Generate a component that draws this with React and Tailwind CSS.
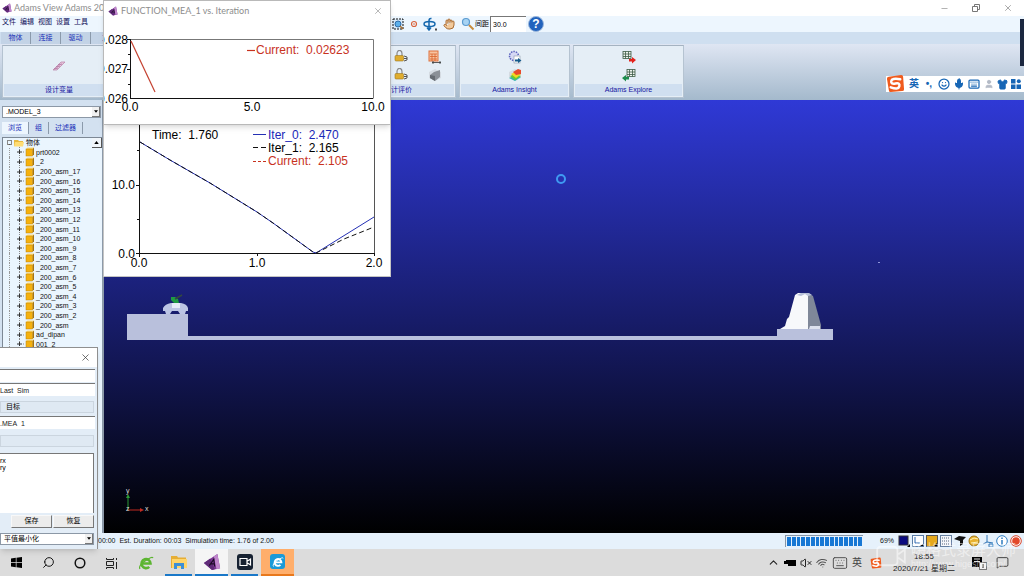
import clsx from 'clsx';
import {
  ChevronUp,
  Hand,
  Keyboard,
  MessageSquare,
  Mic,
  Minus,
  Search,
  Shirt,
  Smile,
  User,
  VolumeX,
  Wifi,
  X,
} from 'lucide-react';

const MENUS = ['文件', '编辑', '视图', '设置', '工具'];
const RIBBON_TABS = ['物体', '连接', '驱动', '力'];
const BROWSER_TABS = ['浏览', '组', '过滤器'];
const PARTS = [
  'prt0002',
  '_2',
  '_200_asm_17',
  '_200_asm_16',
  '_200_asm_15',
  '_200_asm_14',
  '_200_asm_13',
  '_200_asm_12',
  '_200_asm_11',
  '_200_asm_10',
  '_200_asm_9',
  '_200_asm_8',
  '_200_asm_7',
  '_200_asm_6',
  '_200_asm_5',
  '_200_asm_4',
  '_200_asm_3',
  '_200_asm_2',
  '_200_asm',
  'ad_dipan',
  '001_2',
];

function AdamsLogo({ className }) {
  return (
    <svg viewBox="0 0 20 20" className={className} aria-hidden="true">
      <path d="M1 11 16 1l3 16-9 2z" fill="#7b3794" />
      <path d="M16 1l3 16-4 1-3-14z" fill="#c086cc" />
      <path d="M1 11l9 8 3-1-5-12z" fill="#5f2a78" />
      <path d="M7 14l5-7 1 8M9 12h4" fill="none" stroke="#1d0b26" strokeWidth="1.300" />
    </svg>
  );
}

function SogouLogo({ className }) {
  return (
    <svg viewBox="0 0 20 20" className={className} aria-hidden="true">
      <path d="M3 3 16 1q2 0 2 2l1 13q0 2-2 2L5 19q-2 0-2-2L1 5q0-2 2-2z" fill="#f05a1c" />
      <path
        d="M15 5.500Q6 4 5.500 7.500T10 10t4 3-9 1"
        fill="none"
        stroke="#fff"
        strokeWidth="2.600"
        strokeLinecap="round"
      />
    </svg>
  );
}

function LockIcon() {
  return (
    <svg viewBox="0 0 14 12" className="h-3 w-3.5" aria-hidden="true">
      <path d="M3 6V3.500a2 2.500 0 0 1 5 0V6" fill="none" stroke="#8a8a8a" strokeWidth="1.200" />
      <rect x="1" y="5.500" width="8.500" height="5.500" rx="1" fill="#e0ad2e" stroke="#9c7720" strokeWidth=".6" />
      <path d="M10 6l3 1v3l-3 1M10 8.500h3" fill="none" stroke="#555" />
    </svg>
  );
}

function CalculatorIcon() {
  return (
    <svg viewBox="0 0 14 14" className="h-3.5 w-3.5" aria-hidden="true">
      <rect x="1" y="1" width="9" height="10" fill="#f7c3a0" stroke="#e0703a" />
      <path d="M2 4h7M2 6.500h7M2 9h7M4 4v7M7 4v7" stroke="#d9622b" strokeWidth=".8" />
      <path d="M4 12.500h9M5 11v3M12 11v3" stroke="#333" strokeWidth=".8" />
    </svg>
  );
}

function SurfaceIcon({ color }) {
  return (
    <svg viewBox="0 0 14 14" className="h-3.5 w-3.5" aria-hidden="true">
      <path d="M1 4l6-3 6 3v6l-6 3-6-3z" fill="#d5dbe2" />
      {color ? (
        <>
          <path d="M1 10l5-2 7 1-6 4z" fill="#2fb6b0" />
          <path d="M2 8l5-2 6 2-6 4z" fill="#6cc832" />
          <path d="M3 6l4-2 6 2-5 4z" fill="#f4d61f" />
          <path d="M5 4l5-3 3 1v4l-5 1z" fill="#e8492b" />
        </>
      ) : (
        <>
          <path d="M2 7l4-3 6-2v7l-5 4-5-3z" fill="#8b9097" />
          <path d="M2 7l5 1v5l-5-3z" fill="#666b72" />
        </>
      )}
    </svg>
  );
}

function InsightExportIcon() {
  return (
    <svg viewBox="0 0 14 14" className="h-3.5 w-3.5" aria-hidden="true">
      <circle cx="6" cy="6" r="4.500" fill="#d6d9f5" stroke="#5a61bd" strokeWidth="1.500" strokeDasharray="1.500 1" />
      <rect x="6" y="6" width="6" height="7" fill="#fff" stroke="#8a96a8" strokeWidth=".6" />
      <path d="M7 9.500h3V8l3.500 2.500L10 13v-1.500H7z" fill="#155a8a" />
    </svg>
  );
}

function SheetIcon({ incoming }) {
  return (
    <svg viewBox="0 0 14 14" className="h-3.5 w-3.5" aria-hidden="true">
      <g transform={incoming ? 'translate(4 0)' : undefined}>
        <rect x="1" y="1.500" width="8" height="7" fill="#eef4ee" stroke="#3c5b45" strokeWidth=".8" />
        <path d="M1 4h8M1 6.500h8M3.500 1.500v7M6.500 1.500v7" stroke="#3c5b45" strokeWidth=".8" />
      </g>
      {incoming ? (
        <path d="M7 9H4V7L0 10l4 3.500v-2h3z" fill="#1d8d4d" />
      ) : (
        <path d="M7 9h3V7l4 3-4 3.500v-2H7z" fill="#e3231c" />
      )}
    </svg>
  );
}

function RibbonGroup({ label, width, children }) {
  return (
    <section
      className={clsx(
        'flex shrink-0 flex-col border border-[#b5c3d1] border-t-[#a5b3c1] bg-[#e5eef6] p-px',
        width
      )}
    >
      <div className="flex flex-1 items-center justify-center">{children}</div>
      <h2 className="h-3 bg-[#d0dff0] text-center text-[7px] leading-3 text-[#1414a0]">{label}</h2>
    </section>
  );
}

function TitleBar() {
  return (
    <header className="flex h-4 shrink-0 items-center bg-white pl-0.5 text-[#8d8d8d]">
      <AdamsLogo className="h-2.5 w-2.5" />
      <h1 className="ml-0.5 flex-1 text-[9px] leading-4 font-[Lato,sans-serif]">
        Adams View Adams 2018
      </h1>
      <div className="flex text-[#777]">
        <button type="button" aria-label="Minimize" className="grid h-4 w-8 place-items-center">
          <Minus size={9} strokeWidth={1.5} />
        </button>
        <button type="button" aria-label="Restore" className="grid h-4 w-8 place-items-center">
          <svg viewBox="0 0 8 8" className="h-2 w-2" fill="none" stroke="currentColor" aria-hidden="true">
            <path d="M.5 2.500h5v5h-5zM2.500 2V.5h5v5H6" />
          </svg>
        </button>
        <button type="button" aria-label="Close" className="grid h-4 w-8 place-items-center">
          <X size={10} strokeWidth={1.5} />
        </button>
      </div>
    </header>
  );
}

function MenuBar() {
  return (
    <div className="flex h-4 shrink-0 items-center bg-[#edf6fe]">
      <nav className="flex h-4 w-[391px] shrink-0 items-start gap-1 pl-0.5 text-[7px] leading-3 text-[#10105a]">
        {MENUS.map((m) => (
          <button type="button" key={m}>
            {m}
          </button>
        ))}
      </nav>
      <div className="flex h-4 items-center gap-1">
        <button type="button" aria-label="Zoom box">
          <svg viewBox="0 0 14 14" className="h-3.5 w-3.5" aria-hidden="true">
            <rect x="2" y="2" width="10" height="10" fill="#d8eafa" stroke="#111" strokeDasharray="2 1" />
            <circle cx="7" cy="7" r="3" fill="#5cb0ea" stroke="#2d6ba8" />
            <path d="M9 9l3 3" stroke="#a87031" strokeWidth="1.500" />
          </svg>
        </button>
        <button type="button" aria-label="Center">
          <svg viewBox="0 0 10 10" className="h-2.5 w-2.5" fill="none" aria-hidden="true">
            <circle cx="5" cy="5" r="2.500" stroke="#d9633c" strokeWidth="1.200" />
            <circle cx="5" cy="5" r=".8" fill="#d9633c" />
          </svg>
        </button>
        <button type="button" aria-label="Rotate">
          <svg viewBox="0 0 14 14" className="h-3.5 w-3.5" fill="none" stroke="#1668ae" strokeWidth="1.500" aria-hidden="true">
            <path d="M8.500 1.500Q6 1 6 4v8M4 10.500l2 2.500 2-2.500" />
            <ellipse cx="6.500" cy="7" rx="5.500" ry="2.500" />
            <path d="M13 11.500v2" stroke="#111" />
          </svg>
        </button>
        <button type="button" aria-label="Pan" className="px-0.5">
          <Hand size={12} strokeWidth={2} color="#a86b32" fill="#f2c99a" />
        </button>
        <button type="button" aria-label="Zoom">
          <svg viewBox="0 0 14 14" className="h-3.5 w-3.5" aria-hidden="true">
            <circle cx="5" cy="5" r="3.500" fill="#a7d3f3" stroke="#5b9bd0" strokeWidth="1.200" />
            <path d="M8 8l4.500 4.500" stroke="#c78b3c" strokeWidth="2" />
          </svg>
        </button>
      </div>
      <label className="flex shrink-0 items-center text-[7px] text-black">
        间距
        <input
          defaultValue="30.0"
          className="ml-px h-4 w-9 border-t border-l border-[#777] bg-white pl-0.5 text-[7px]"
        />
      </label>
      <button
        type="button"
        className="ml-0.5 grid h-4 w-4 shrink-0 place-items-center rounded-full border border-[#9db8dc] bg-[#2263bd] text-[12px] leading-3 font-bold text-white"
      >
        ?
      </button>
    </div>
  );
}

function Ribbon() {
  return (
    <>
      <div className="flex h-3 shrink-0 bg-[#cfdff0] pl-px text-[7px] text-[#1a30b8]">
        {RIBBON_TABS.map((t) => (
          <button
            type="button"
            key={t}
            className="w-[30px] border-r border-[#8b9aab] bg-[#c3d3e6] leading-3"
          >
            {t}
          </button>
        ))}
      </div>
      <div className="flex h-14 shrink-0 gap-[3px] bg-linear-to-b/srgb from-[#dfe6f3] to-[#a4b9cc] px-0.5 pt-px pb-0.5">
        <RibbonGroup label="设计变量" width="w-[114px]">
          <svg viewBox="0 0 14 10" className="h-2.5 w-3.5" aria-hidden="true">
            <path d="M1 9 9 1l4 0-8 8z" fill="#e6c5dc" stroke="#b77fa8" strokeWidth=".7" />
            <path d="M2 8l4-1M4 6l4-1M6 4l4-1" stroke="#a25f90" strokeWidth=".7" />
          </svg>
        </RibbonGroup>
        <RibbonGroup label="" width="w-[218px]" />
        <RibbonGroup label="设计评价" width="w-[116px]">
          <div className="ml-10 grid grid-cols-2 gap-x-5 gap-y-1">
            <LockIcon />
            <CalculatorIcon />
            <LockIcon />
            <SurfaceIcon />
          </div>
        </RibbonGroup>
        <RibbonGroup label="Adams Insight" width="w-[111px]">
          <div className="grid gap-1">
            <InsightExportIcon />
            <SurfaceIcon color />
          </div>
        </RibbonGroup>
        <RibbonGroup label="Adams Explore" width="w-[111px]">
          <div className="grid gap-1">
            <SheetIcon />
            <SheetIcon incoming />
          </div>
        </RibbonGroup>
      </div>
    </>
  );
}

function SmallSelect({ label, value, className }) {
  return (
    <div className={clsx('relative', className)}>
      <select
        aria-label={label}
        defaultValue={value}
        className="block h-3 w-full appearance-none border border-[#8c98a6] bg-white pl-[3px] text-[7px] leading-[10px] text-black"
      >
        <option>{value}</option>
      </select>
      <span className="pointer-events-none absolute inset-y-px right-px grid w-2 place-items-center border-r border-b border-[#777] bg-[#f0f0f0]">
        <svg viewBox="0 0 6 4" className="h-[3px] w-1" aria-hidden="true">
          <path d="M0 0h6L3 4z" />
        </svg>
      </span>
    </div>
  );
}

function PartIcon() {
  return (
    <svg viewBox="0 0 10 10" className="h-2.5 w-2.5 shrink-0" aria-hidden="true">
      <path d="M1 2l1.500-1.500h6.500L7.500 2z" fill="#ffdc7a" />
      <path d="M7.500 2 9 .5v7L7.500 9z" fill="#a8740c" />
      <rect x="1" y="2" width="6.500" height="7" fill="#f5b10f" stroke="#b8820f" strokeWidth=".5" />
    </svg>
  );
}

function ModelBrowser() {
  return (
    <aside className="flex w-[104px] shrink-0 flex-col border-r-2 border-[#8d9aa9] bg-[#d3e1f0] pt-[6px] pl-0.5">
      <SmallSelect label="Model" value=".MODEL_3" className="mr-px" />
      <div className="mt-1 flex h-3 shrink-0 text-[7px] leading-3 text-[#1a30b8]">
        {BROWSER_TABS.map((t, i) => (
          <button
            type="button"
            key={t}
            className={clsx('border-r border-[#8b9aab] px-1.5', i === 0 && 'bg-[#edf6fe]')}
          >
            {t}
          </button>
        ))}
      </div>
      <div className="mt-[3px] flex min-h-0 flex-1 overflow-hidden border-t border-l border-[#7d8895] bg-[#eaf5fe]">
        <ul className="flex h-[211px] min-w-0 flex-1 flex-col text-[7px] text-[#111]">
          <li className="flex min-h-0 flex-1 items-center gap-0.5 pl-1">
            <span className="grid h-[5px] w-[5px] place-items-center border border-[#888] text-[6px] leading-none">-</span>
            <svg viewBox="0 0 10 8" className="h-2 w-2.5" aria-hidden="true">
              <path d="M0 1h4l1 1h4v5H0z" fill="#e8b93f" />
              <path d="M1 3h9L9 7.500H0z" fill="#ffdc73" />
            </svg>
            物体
          </li>
          {PARTS.map((p) => (
            <li key={p} className="ml-1.5 flex min-h-0 flex-1 items-center border-l border-dotted border-[#999] pl-[5px]">
              <svg viewBox="0 0 10 10" className="h-2.5 w-2.5 shrink-0" fill="none" stroke="#333" aria-hidden="true">
                <path d="M4.500 0v10M8 5h2" stroke="#888" strokeDasharray="1 1" />
                <path d="M2 5h5M4.500 3v4" />
              </svg>
              <PartIcon />
              <span className="pl-px leading-none whitespace-nowrap">{p}</span>
            </li>
          ))}
        </ul>
        <button
          type="button"
          aria-label="Scroll up"
          className="grid h-2.5 w-2.5 shrink-0 place-items-center border-r border-b border-[#555] bg-[#f0f5fa]"
        >
          <svg viewBox="0 0 6 4" className="h-[3px] w-[5px]" aria-hidden="true">
            <path d="M0 4h6L3 0z" />
          </svg>
        </button>
      </div>
    </aside>
  );
}

function Scene() {
  return (
    <main className="min-w-0 flex-1 overflow-hidden bg-linear-to-b/srgb from-[#2f39d6] to-black">
      <svg className="h-full w-full" role="img" aria-label="Model view">
        <g shapeRendering="crispEdges">
          <rect x="23" y="214" width="61" height="26" fill="#b9c0dc" />
          <rect x="84" y="236" width="590" height="4" fill="#b9c0dc" />
          <rect x="673" y="229" width="56" height="11" fill="#b9c0dc" />
        </g>
        <path d="M59 208q2-4 8-5h10q6 1 7 5v3h-2l-1 3h-5l-2-3h-6l-2 3h-4l-1-3h-2z" fill="#bcc5e4" />
        <path d="M68 203h8v5h-8z" fill="#e6ecf8" />
        <path d="M67 197h4l3 2 1 4h-5l-3-3z" fill="#1f9b42" />
        <path d="M71 199l7-4" stroke="#33483f" strokeWidth="1.500" />
        <path d="M676 229l5-3 2-7 2-2 6-22 3-2h10v36z" fill="#f7f8fb" />
        <path d="M704 193l5 3 8 29v4h-13z" fill="#7f8799" />
        <path d="M706 226h10v3h-11z" fill="#dde1ee" />
        <path d="M693 195l4-2h8l3 2-4 1-3-2-4 2z" fill="#b6bfd8" />
        <circle cx="457" cy="79" r="4" fill="none" stroke="#3f9af2" strokeWidth="2" />
        <rect x="774" y="162" width="2" height="1" fill="#8f95d8" />
        <g fill="none">
          <path d="M24 410v-14" stroke="#2a9a36" />
          <path d="M22 398l2-4 2 4z" fill="#2a9a36" />
          <path d="M24 410h14" stroke="#c02a20" />
          <path d="M36 408l4 2-4 2z" fill="#c02a20" />
        </g>
        <g fill="#ddd" fontSize="7">
          <text x="22" y="393">y</text>
          <text x="41" y="411">x</text>
          <text x="22" y="411">z</text>
        </g>
      </svg>
    </main>
  );
}

function IterationWindow() {
  return (
    <section className="absolute top-0 left-[103px] z-20 w-[288px] overflow-hidden border border-[#b9b9b9] bg-white shadow-md">
      <header className="flex h-5 items-center pl-1 text-[#8d8d8d]">
        <AdamsLogo className="h-2.5 w-2.5" />
        <h2 className="ml-[3px] flex-1 text-[9px] leading-4 font-[Lato,sans-serif]">
          FUNCTION_MEA_1 vs. Iteration
        </h2>
        <button type="button" aria-label="Close plot" className="grid h-5 w-6 place-items-center">
          <X size={10} strokeWidth={1.5} />
        </button>
      </header>
      <svg className="block h-[103px] w-full" fontSize="12" role="img" aria-label="Objective per iteration">
        <path d="M26.500 18.500h243v59" fill="none" stroke="#777" />
        <path d="M26.500 18v60M26 77.500h243M23 18.500h3M23 48.500h3M24 33.500h2M24 63.500h2" fill="none" stroke="#111" />
        <path d="M27 20 51 71" stroke="#c4402f" strokeWidth="1.200" />
        <g textAnchor="end">
          <text x="24" y="23">0.028</text>
          <text x="24" y="52">0.027</text>
          <text x="24" y="82">0.026</text>
        </g>
        <g textAnchor="middle">
          <text x="26" y="90">0.0</text>
          <text x="148" y="90">5.0</text>
          <text x="269" y="90">10.0</text>
        </g>
        <path d="M143 29.500h8" stroke="#c8321e" strokeWidth="1.200" />
        <text x="152" y="33" fill="#c8321e" xmlSpace="preserve">
          {'Current:  0.02623'}
        </text>
      </svg>
    </section>
  );
}

function TimeWindow() {
  return (
    <section className="absolute top-[104px] left-[103px] z-10 w-[288px] overflow-hidden border border-[#c4c4c4] bg-white">
      <svg className="block h-[171px] w-full" fontSize="12" role="img" aria-label="Measure over time">
        <path d="M270.500 0v149" stroke="#555" />
        <path d="M35.500 0v152M32 148.500h239M32 80.500h3M33 45.500h2M33 114.500h2M153.500 148v3M270.500 148v3" fill="none" stroke="#111" />
        <path d="M36 37 66 55 106 78 153 107 169 118 209 147l3 1 58-36" fill="none" stroke="#2430b4" />
        <path
          d="M36 37 66 55 106 78 153 107 169 118 209 147l3 1 28-14 30-12"
          fill="none"
          stroke="#111"
          strokeDasharray="5 3"
        />
        <g textAnchor="end">
          <text x="31" y="84">10.0</text>
          <text x="31" y="153">0.0</text>
        </g>
        <g textAnchor="middle">
          <text x="35" y="162">0.0</text>
          <text x="153" y="162">1.0</text>
          <text x="270" y="162">2.0</text>
        </g>
        <text x="48" y="34" xmlSpace="preserve">{'Time:  1.760'}</text>
        <path d="M149 29.500h13" stroke="#2430b4" />
        <path d="M149 42.500h13" stroke="#111" strokeDasharray="5 3" />
        <path d="M149 56.500h13" stroke="#c8321e" strokeDasharray="3 2" />
        <text x="164" y="34" fill="#1a28b8" xmlSpace="preserve">{'Iter_0:  2.470'}</text>
        <text x="164" y="47" xmlSpace="preserve">{'Iter_1:  2.165'}</text>
        <text x="164" y="60" fill="#c8321e" xmlSpace="preserve">{'Current:  2.105'}</text>
      </svg>
    </section>
  );
}

function OptimizeDialog() {
  const field = 'block h-[13px] w-[95px] border-t border-[#777] bg-white text-[7px] leading-3 text-[#222]';
  const heading = 'h-3 w-[94px] border border-[#cbd5df] bg-[#dfe9f3] pl-[5px] text-[7px] leading-[10px]';
  const button = 'h-[13px] flex-1 border border-[#f8f8f8] border-r-[#777] border-b-[#777] bg-[#ececec]';
  return (
    <section className="absolute bottom-0 left-0 z-20 flex h-[202px] w-[98px] flex-col border-t border-r border-[#8f8f8f] bg-[#e3edf7] shadow-md">
      <header className="flex h-[19px] shrink-0 justify-end bg-white">
        <button type="button" aria-label="Close dialog" className="grid w-[23px] place-items-center text-[#333]">
          <X size={11} strokeWidth={1.5} />
        </button>
      </header>
      <div className="flex flex-1 flex-col pt-[2px]">
        <input aria-label="Model" className={field} />
        <input aria-label="Result" defaultValue="Last_Sim" className={clsx(field, 'mt-px')} />
        <h3 className={clsx(heading, 'mt-[5px]')}>目标</h3>
        <input aria-label="Objective" defaultValue=".MEA_1" className={clsx(field, 'mt-[3px]')} />
        <div className={clsx(heading, 'mt-1.5')} />
        <textarea
          aria-label="Variables"
          defaultValue={'rx\nry'}
          className="mt-1.5 block h-[60px] w-[94px] resize-none border-t border-r border-[#777] bg-white pt-[3px] text-[7px] leading-[7px]"
        />
        <div className="mt-[2px] flex w-[94px] gap-px pl-[11px] text-[7px]">
          <button type="button" className={button}>保存</button>
          <button type="button" className={button}>恢复</button>
        </div>
        <SmallSelect label="Goal" value="平值最小化" className="mt-[5px] w-[94px]" />
      </div>
    </section>
  );
}

function ImeBar() {
  return (
    <div className="absolute top-[76px] right-0 z-20 flex h-4 items-center bg-white pr-px pl-5 text-[#1766b5]">
      <SogouLogo className="absolute -top-0.5 left-0 h-[19px] w-[19px]" />
      <span className="w-4 text-center text-[10px] leading-4 font-bold">英</span>
      <span className="w-[14px] text-center text-[10px] leading-4 font-bold">•,</span>
      <span className="flex w-[87px] items-center justify-around">
        <Smile size={12} strokeWidth={2.5} />
        <Mic size={12} fill="currentColor" />
        <Keyboard size={12} strokeWidth={2.5} />
        <User size={10} color="#b3bac6" fill="#b3bac6" />
        <Shirt size={11} fill="currentColor" />
        <svg viewBox="0 0 10 10" className="h-2.5 w-2.5" fill="currentColor" aria-hidden="true">
          <path d="M0 0h4.500v4.500H0zM0 5.500h4.500V10H0zM5.500 5.500H10V10H5.500z" />
          <circle cx="7.800" cy="2.200" r="2" />
        </svg>
      </span>
    </div>
  );
}

function StatusIcons() {
  const icon = 'h-3 w-3';
  return (
    <div className="flex gap-0.5" aria-hidden="true">
      <svg viewBox="0 0 12 12" className={icon}>
        <rect x="1" y="1" width="9" height="9" fill="#0b0b80" stroke="#333" />
        <path d="M9 12l3-3v3z" />
      </svg>
      <svg viewBox="0 0 12 12" className={icon}>
        <rect x=".5" y=".5" width="11" height="11" fill="#fff" stroke="#5a7ca5" />
        <path d="M3 2v6h5" fill="none" stroke="#2b66b0" />
        <path d="M8 11l3-2v2z" />
      </svg>
      <svg viewBox="0 0 12 12" className={icon}>
        <rect x=".5" y=".5" width="11" height="11" fill="#e5a81c" stroke="#555" />
        <path d="M8 11l3-3v3z" />
      </svg>
      <svg viewBox="0 0 12 12" className={icon}>
        <rect x=".5" y=".5" width="11" height="11" fill="#f4f6fa" stroke="#6780a0" />
        <path d="M2 3h8M2 6h8M2 9h8" stroke="#53657d" strokeDasharray="1 1" />
      </svg>
      <svg viewBox="0 0 12 12" className={icon}>
        <path d="M0 4l5-3 7 1-3 3v4l-3 2V6z" fill="#111" />
      </svg>
      <svg viewBox="0 0 12 12" className={icon}>
        <circle cx="6" cy="6" r="5" fill="#e8b230" stroke="#9b7417" />
        <path d="M2 5l4-2 4 1M3 8l7-1" fill="none" stroke="#fff2b8" />
      </svg>
      <svg viewBox="0 0 12 12" className={icon}>
        <path d="M5 0v7L1 9M5 7l6 1M7 9h4v3H7z" fill="none" stroke="#2f74b5" />
      </svg>
      <svg viewBox="0 0 12 12" className={icon}>
        <circle cx="6" cy="6" r="5.300" fill="#fff" stroke="#2e7cc0" />
        <path d="M6 5v4.500M6 2.500v1.500" stroke="#2e7cc0" strokeWidth="1.500" />
      </svg>
      <svg viewBox="0 0 12 12" className={icon}>
        <circle cx="6" cy="6" r="5.300" fill="#fff" stroke="#d9452b" />
        <circle cx="6" cy="6" r="3.800" fill="#e2492c" />
      </svg>
    </div>
  );
}

function StatusBar() {
  return (
    <footer className="flex h-4 shrink-0 items-center bg-[#e6f1fb] pr-0.5 pl-[98px] text-[7px] text-[#111]">
      <p className="flex-1 whitespace-pre">{'00:00  Est. Duration: 00:03  Simulation time: 1.76 of 2.00'}</p>
      <div className="flex h-3 w-[78px] gap-px border-t border-l border-[#8795a5] p-px" role="progressbar" aria-valuenow={69}>
        {Array.from({ length: 16 }, (_, i) => (
          <span key={i} className="flex-1 bg-[#1878d4]" />
        ))}
      </div>
      <span className="w-[35px] pr-1 text-right">69%</span>
      <StatusIcons />
    </footer>
  );
}

function TaskButton({ label, className, children }) {
  return (
    <button type="button" aria-label={label} className={clsx('grid h-full place-items-center', className)}>
      {children}
    </button>
  );
}

function BrowserE({ className }) {
  return (
    <svg viewBox="0 0 16 16" className={className} fill="none" stroke="currentColor" strokeWidth="2.600" aria-hidden="true">
      <path d="M4 8.500h8.500a4.500 4.500 0 1 0-1.300 3.300" />
      <path d="M2 14q-2-3 5-8t8-3" strokeWidth="1.200" />
    </svg>
  );
}

function Taskbar() {
  return (
    <div className="flex h-[27px] shrink-0 items-center bg-[#dcdcdc] text-[#111]">
      <TaskButton label="Start" className="w-8">
        <svg viewBox="0 0 11 11" className="h-[11px] w-[11px]" aria-hidden="true">
          <path d="M0 1.500 4.800.8v4.400H0zM5.500.7 11 0v5.200H5.500zM0 5.900h4.800v4.400L0 9.600zM5.500 5.900H11V11l-5.500-.7z" />
        </svg>
      </TaskButton>
      <TaskButton label="Search" className="w-8">
        <Search size={13} strokeWidth={1.8} className="-scale-x-100" />
      </TaskButton>
      <TaskButton label="Cortana" className="w-8">
        <svg viewBox="0 0 12 12" className="h-3 w-3" aria-hidden="true">
          <circle cx="6" cy="6" r="4.800" fill="none" stroke="#111" strokeWidth="1.500" />
        </svg>
      </TaskButton>
      <TaskButton label="Task view" className="w-8">
        <svg viewBox="0 0 12 12" className="h-3 w-3" fill="none" stroke="#222" aria-hidden="true">
          <path d="M.5 1v1.500h7V1M.5 4.500h7v4h-7zM.5 12v-1.500h7V12M10.500 1v2M10.500 5v7" />
        </svg>
      </TaskButton>
      <TaskButton label="Browser" className="ml-px w-[33px] text-[#5cb531]">
        <BrowserE className="h-4 w-4" />
      </TaskButton>
      <TaskButton label="Files" className="w-[33px]">
        <span className="grid h-[27px] w-[27px] place-items-center border-b-2 border-[#1a78c8]">
          <svg viewBox="0 0 16 14" className="h-3.5 w-4" aria-hidden="true">
            <path d="M0 1h6l1 1.500h8V13H0z" fill="#e6ae35" />
            <path d="M1 4h15v9H1z" fill="#ffd56b" />
            <path d="M3 14V8h10v6h-3v-3H6v3z" fill="#3d8fd6" />
          </svg>
        </span>
      </TaskButton>
      <TaskButton label="Adams" className="w-[33px] border-b-2 border-[#1a78c8] bg-[#f5f5f5]">
        <AdamsLogo className="h-[18px] w-[18px]" />
      </TaskButton>
      <TaskButton label="Recorder" className="w-[33px]">
        <span className="grid h-[27px] w-[27px] place-items-center border-b-2 border-[#1a78c8]">
          <svg viewBox="0 0 16 16" className="h-4 w-4" aria-hidden="true">
            <rect width="16" height="16" rx="3" fill="#172232" />
            <path d="M3 4.500h7v7H3zM10.500 7l3-2v6l-3-2" fill="none" stroke="#fff" strokeWidth="1.200" />
          </svg>
        </span>
      </TaskButton>
      <TaskButton label="Edge" className="w-[33px] border-b-2 border-[#e8781c] bg-[#ffae6b]">
        <span className="grid h-[15px] w-[15px] place-items-center rounded-[3px] bg-[#1a9ad8] text-white">
          <BrowserE className="h-3 w-3" />
        </span>
      </TaskButton>

      <div className="ml-auto flex items-center text-[#222]">
        <ChevronUp size={13} strokeWidth={2} />
        <svg viewBox="0 0 12 8" className="ml-1 h-2 w-3" aria-hidden="true">
          <path d="M2 1h10v6H4V5H2zM0 2h2v3H0z" />
        </svg>
        <VolumeX size={12} className="ml-1" />
        <Wifi size={12} className="ml-1 -rotate-12" color="#555" />
        <Keyboard size={16} strokeWidth={1.5} className="ml-1" color="#555" />
        <span className="ml-1 text-[10px] leading-3 text-[#444]">英</span>
        <SogouLogo className="ml-2 h-3 w-3" />
        <div className="ml-2 w-[68px] text-center text-[8px] leading-3">
          <p>18:55</p>
          <p className="whitespace-nowrap">2020/7/21 星期二</p>
        </div>
        <svg viewBox="0 0 16 14" className="ml-[14px] h-3.5 w-4" aria-hidden="true">
          <path d="M0 1h10v10H0z" />
          <path d="M2 3h6M2 5.500h6" stroke="#ddd" />
          <rect x="7.500" y="6.500" width="7" height="7" fill="#f3f3f3" stroke="#777" />
          <path d="M11 8v4" stroke="#222" />
        </svg>
        <MessageSquare size={13} strokeWidth={1.5} className="mr-[15px] ml-2" />
      </div>
    </div>
  );
}

// Recorder overlay, sits on top of the clock
function Watermark() {
  return (
    <div className="pointer-events-none absolute right-2 bottom-1.5 z-30 flex items-center gap-1 text-white/50">
      <svg viewBox="0 0 34 26" className="h-6 w-8" fill="none" stroke="currentColor" strokeWidth="2" aria-hidden="true">
        <path d="M6 3h14q4 0 4 4v12q0 4-4 4H6q-4 0-4-4V7q0-4 4-4zM25 11l7-5v14l-7-5" />
      </svg>
      <div className="leading-none">
        <p className="text-[15px] leading-4">嗨格式录屏大师</p>
        <p className="text-[9px] leading-3">http://www.higeshi.com/</p>
      </div>
    </div>
  );
}

export default function App() {
  return (
    <div className="relative flex h-screen flex-col overflow-hidden font-['Liberation_Sans','Noto_Sans_CJK_SC',sans-serif]">
      <div className="relative flex min-h-0 flex-1 flex-col">
        <TitleBar />
        <MenuBar />
        <Ribbon />
        <div className="flex min-h-0 flex-1">
          <ModelBrowser />
          <Scene />
        </div>
        <StatusBar />
        <TimeWindow />
        <IterationWindow />
        <OptimizeDialog />
        <ImeBar />
        <div className="absolute top-[19px] right-0 h-[47px] w-1 bg-[#1b2740]" />
      </div>
      <Taskbar />
      <Watermark />
    </div>
  );
}
